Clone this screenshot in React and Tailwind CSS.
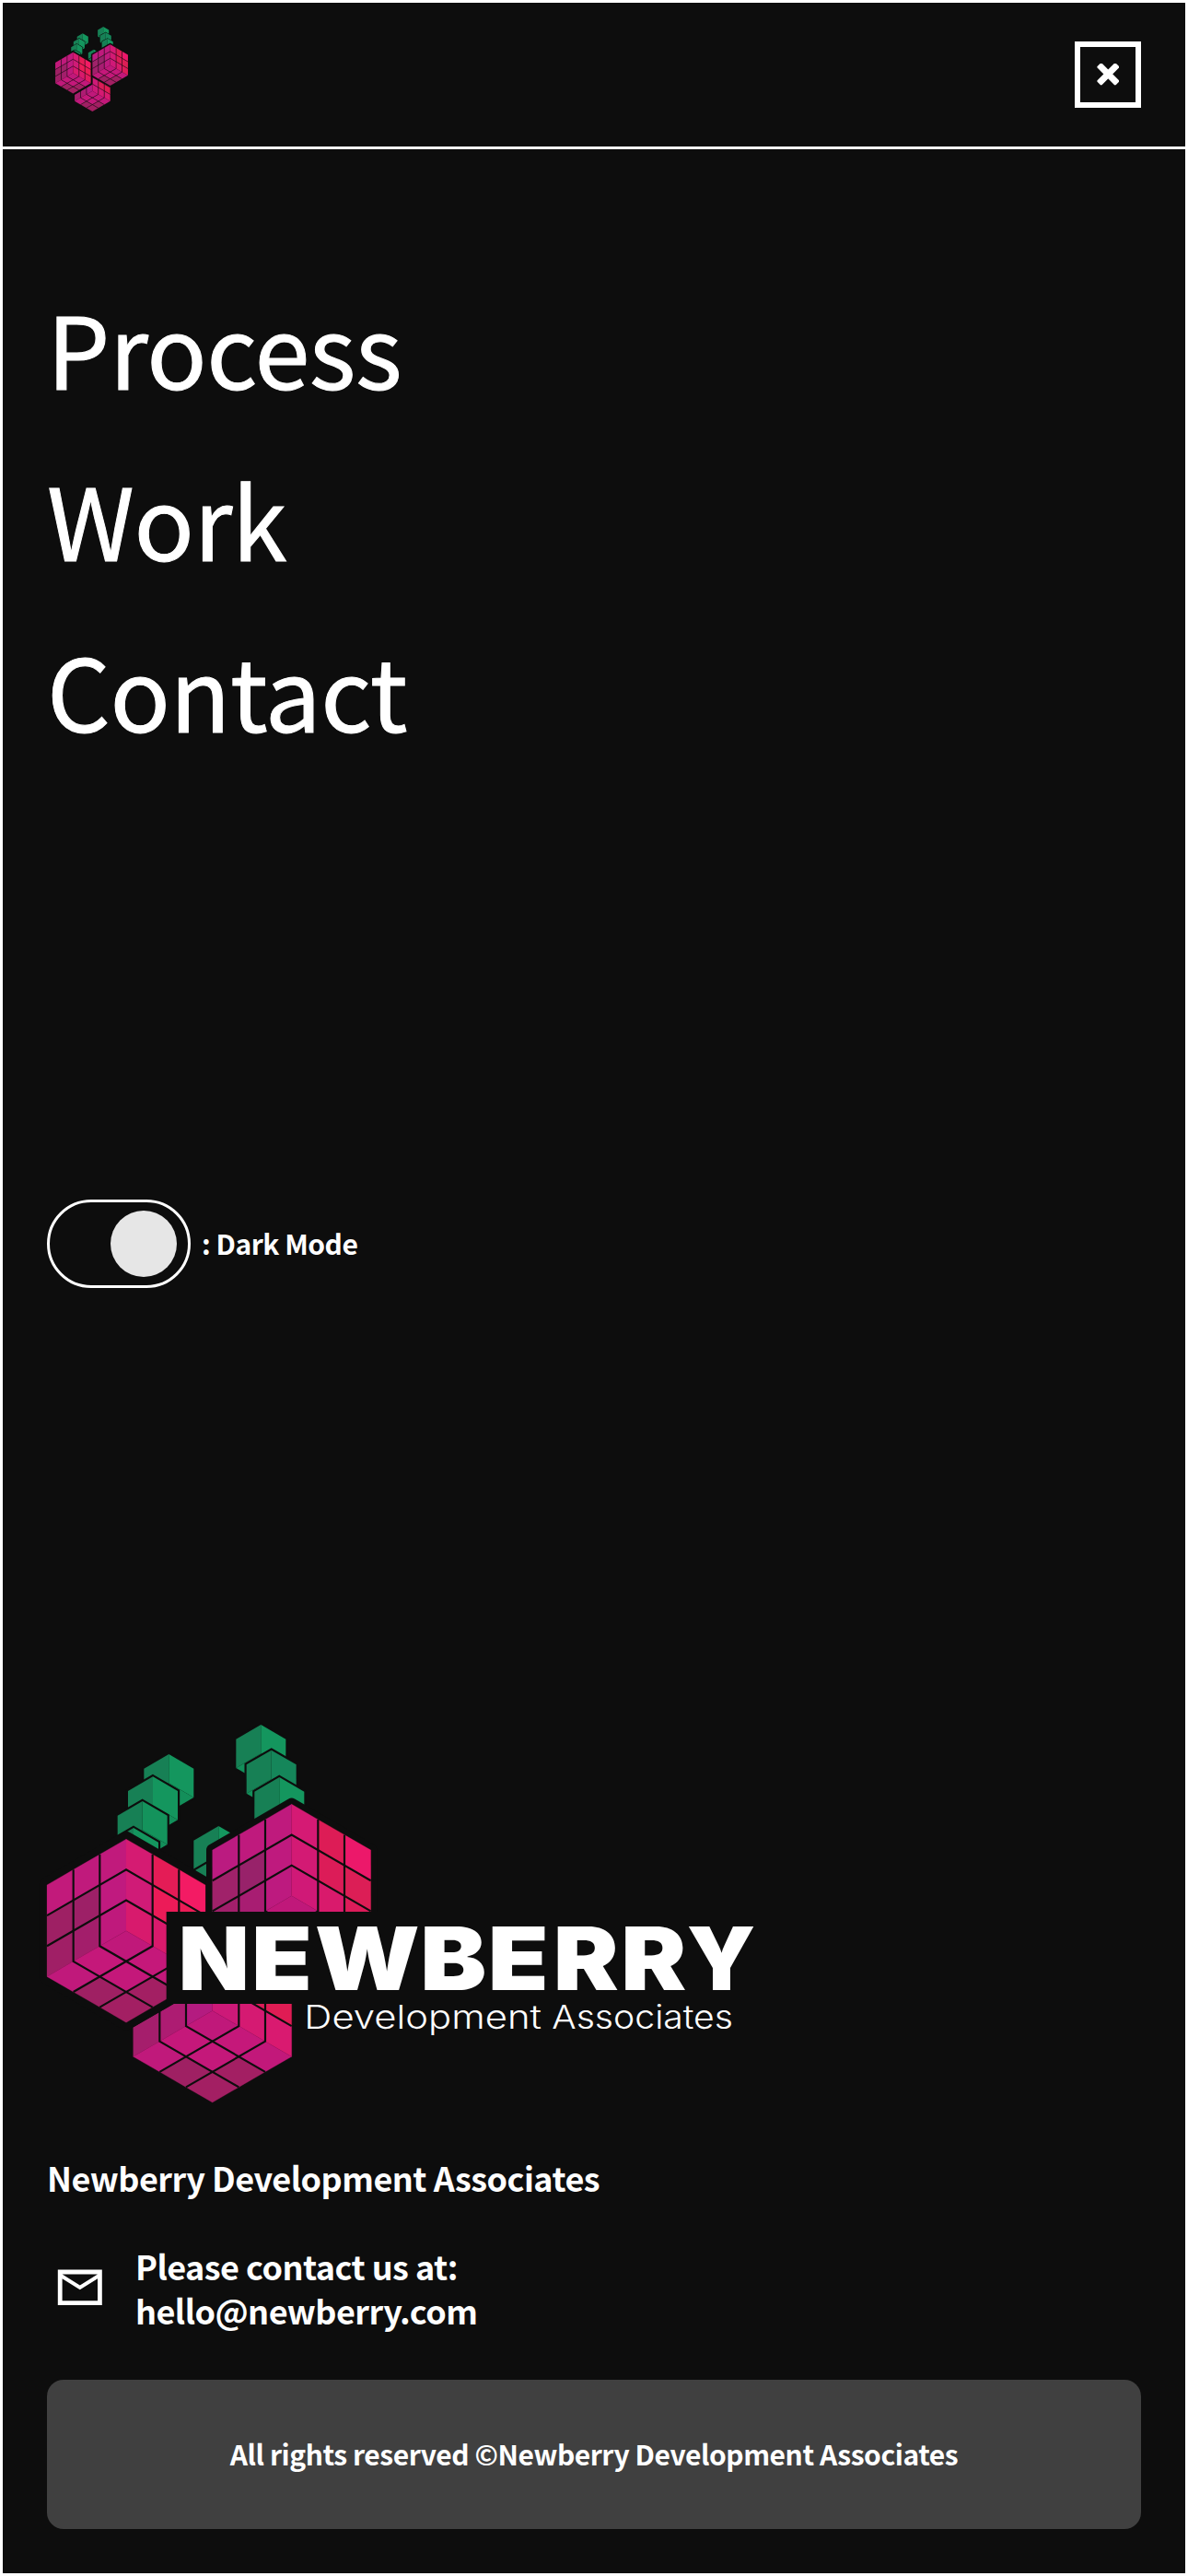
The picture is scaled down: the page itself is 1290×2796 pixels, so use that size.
const BG = '#0d0d0d';
const W = 258;
const R = 298.5;

const pts = (list) => list.map((p) => p.join(',')).join(' ');

const hexagon = (cx, cy, w, r) =>
  pts([
    [cx, cy - r],
    [cx + w, cy - r / 2],
    [cx + w, cy + r / 2],
    [cx, cy + r],
    [cx - w, cy + r / 2],
    [cx - w, cy - r / 2],
  ]);

// Three faces, each given as an origin and two edge vectors.
const FACES = [
  { o: [-W, -R / 2], u: [W, -R / 2], v: [0, R] },
  { o: [0, -R], u: [W, R / 2], v: [0, R] },
  { o: [0, 0], u: [W, R / 2], v: [-W, R / 2] },
];

function Cube({ cx, cy, colors, halo }) {
  return (
    <g transform={`translate(${cx} ${cy})`}>
      <polygon points={hexagon(0, 0, W, R)} fill={BG} stroke={BG} strokeWidth={halo * 2} strokeLinejoin="round" />
      {FACES.map((f, fi) =>
        colors[fi].map((color, i) => {
          const a = i % 3;
          const b = Math.floor(i / 3);
          const at = (s, t) => [
            f.o[0] + (f.u[0] * s + f.v[0] * t) / 3,
            f.o[1] + (f.u[1] * s + f.v[1] * t) / 3,
          ];
          return (
            <polygon
              key={`${fi}-${i}`}
              points={pts([at(a, b), at(a + 1, b), at(a + 1, b + 1), at(a, b + 1)])}
              fill={color}
              stroke={color}
              strokeWidth="0.8"
            />
          );
        }),
      )}
      <g fill="none" stroke={BG} strokeWidth="6.5">
        <path d="M-86,-248.7V49.8L172,199" />
        <path d="M86,-248.7V49.8L-172,199" />
        <path d="M-172,-199V99.5L86,248.7" />
        <path d="M172,-199V99.5L-86,248.7" />
        <path d="M-258,-49.8L0,-199L258,-49.8" />
        <path d="M-258,49.8L0,-99.5L258,49.8" />
      </g>
    </g>
  );
}

function Leaf({ cx, cy, left = '#178055', right = '#14965e', base = '#138f5a' }) {
  const w = 81;
  const r = 94;
  return (
    <g transform={`translate(${cx} ${cy})`}>
      <polygon points={hexagon(0, 0, w, r)} fill={BG} stroke={BG} strokeWidth="13" />
      <polygon points={pts([[-w, -r / 2], [0, -r], [0, 0], [-w, r / 2]])} fill={left} />
      <polygon points={pts([[w, -r / 2], [0, -r], [0, 0], [w, r / 2]])} fill={right} />
      <polygon points={pts([[0, 0], [w, r / 2], [0, r], [-w, r / 2]])} fill={base} />
    </g>
  );
}

const BASE_FACE = ['#c0187a', '#c5187a', '#c2187a', '#c5187a', '#c4187a', '#a31f63', '#c0197b', '#9f2063', '#a31f63'];

const LEFT_CUBE = [
  ['#c21a7b', '#c01a7c', '#c11a7c', '#9e2064', '#9d2067', '#c01a7f', '#a01f66', '#a31e6b', '#bf197c'],
  ['#d51b72', '#e41c56', '#f31b64', '#d01b77', '#ec1b58', '#ec1c56', '#d81a6d', '#d91a6c', '#e21b60'],
  BASE_FACE,
];
const RIGHT_CUBE = [
  ['#bb1b80', '#bf1a7d', '#bf1a7d', '#a0226a', '#98226a', '#bf1a7e', '#a21f6b', '#a81d72', '#bd1a7f'],
  ['#d51a74', '#dd1c56', '#ec186a', '#d31a74', '#dc1c58', '#dc1e56', '#d01977', '#d91a6c', '#dd1c5a'],
  BASE_FACE,
];
const BOTTOM_CUBE = [
  ['#b91b80', '#bf1a7d', '#bf1a7d', '#a11f68', '#a31f6a', '#bf1a7d', '#a51e6c', '#ad1c72', '#b41b80'],
  ['#cf1a76', '#dd1c56', '#ec186a', '#cf1a77', '#dc1c58', '#e01c54', '#cd1978', '#d51a72', '#d91a70'],
  BASE_FACE,
];

function Berries() {
  return (
    <g>
      <Leaf cx={460} cy={256} />
      <Leaf cx={408} cy={329} />
      <Leaf cx={374} cy={409} right="#14935c" />
      <Leaf cx={345} cy={496} />
      <Leaf cx={760} cy={160} />
      <Leaf cx={794} cy={243} right="#15865a" />
      <Leaf cx={820} cy={331} />
      <Leaf cx={622} cy={490} />
      <Leaf cx={622} cy={590} />
      <Cube cx={602} cy={997.5} colors={BOTTOM_CUBE} halo={0} />
      <Cube cx={321} cy={737} colors={LEFT_CUBE} halo={25} />
      <Cube cx={860} cy={623.5} colors={RIGHT_CUBE} halo={20} />
    </g>
  );
}

// Each letter with its left edge and advance in logo units.
const LETTERS = [
  ['N', 491, 231],
  ['E', 729, 198],
  ['W', 935, 342],
  ['B', 1279, 216],
  ['E', 1499, 198],
  ['R', 1712, 213],
  ['R', 1933, 213],
  ['Y', 2147, 224],
];

function FullLogo() {
  return (
    <svg className="block h-[410px] w-[768px] overflow-visible" viewBox="63 66 2304 1230" role="img" aria-label="Newberry Development Associates">
      <Berries />
      <rect x="452" y="675" width="1915" height="300" fill={BG} />
      <g fill="#fff" fontFamily="Inter, sans-serif">
        <g fontSize="286" fontWeight="900">
          {LETTERS.map(([ch, x, w], i) => (
            <text key={i} x={x} y="929" textLength={w} lengthAdjust="spacingAndGlyphs">
              {ch}
            </text>
          ))}
        </g>
        <g fontSize="107" fontWeight="300">
          <text x="901" y="1056" textLength="773" lengthAdjust="spacingAndGlyphs">
            Development
          </text>
          <text x="1708" y="1056" textLength="590" lengthAdjust="spacingAndGlyphs">
            Associates
          </text>
        </g>
      </g>
    </svg>
  );
}

function MailIcon() {
  return (
    <svg className="h-[57.6px] w-[57.6px] shrink-0" viewBox="0 0 24 24" fill="currentColor" aria-hidden="true">
      <path d="M22 4H2v16h20V4zm-2 14H4V8l8 5 8-5v10zm-8-7L4 6h16l-8 5z" />
    </svg>
  );
}

export default function App() {
  return (
    <div className="flex h-[2796px] w-[1290px] flex-col border-[3px] border-white bg-[#0d0d0d] font-['Noto_Sans_CJK_JP',sans-serif] text-white">
      <header className="flex h-[159px] shrink-0 items-start justify-between border-b-[3px] border-white pr-12 pl-[57px]">
        <svg className="mt-[26px] h-[92px] w-[79px]" viewBox="63 66 1055 1230" role="img" aria-label="Newberry">
          <Berries />
        </svg>
        <button aria-label="Close menu" className="mt-[42px] flex h-[72px] w-[72px] items-center justify-center border-[6px] border-white">
          <svg className="h-6 w-6" viewBox="0 0 24 24" fill="currentColor">
            <g transform="translate(12.3 11.4)">
              <rect x="-14.2" y="-3.5" width="28.4" height="7" rx="1.4" transform="rotate(45)" />
              <rect x="-14.2" y="-3.5" width="28.4" height="7" rx="1.4" transform="rotate(-45)" />
            </g>
          </svg>
        </button>
      </header>
      <main className="flex flex-col px-12">
        <nav className="flex flex-col pt-[121px] text-[108px] leading-[186px] tracking-[-0.4px] [-webkit-text-stroke:1px_white]">
          <a>Process</a>
          <a>Work</a>
          <a>Contact</a>
        </nav>
        <div className="mt-[461px] flex items-center gap-3">
          <div role="switch" aria-checked="true" className="flex h-24 w-[156px] items-center justify-end rounded-full border-[3px] border-white pr-3">
            <span className="h-[72px] w-[72px] rounded-full bg-[#e6e6e6]" />
          </div>
          <span className="pb-[2px] text-[30px] leading-[48px] font-bold tracking-[-0.5px]">: Dark Mode</span>
        </div>
      </main>
      <footer className="mt-[474px] flex flex-col px-12">
        <FullLogo />
        <p className="mt-[57px] text-[36px] leading-[48px] font-bold tracking-[-0.52px]">Newberry Development Associates</p>
        <div className="mt-[48px] flex items-center pl-[7px]">
          <MailIcon />
          <p className="ml-[31.4px] text-[36px] leading-[48px] font-bold tracking-[-0.55px]">
            Please contact us at:
            <br />
            hello@newberry.com
          </p>
        </div>
        <div className="mt-[52px] flex h-[162px] items-center justify-center rounded-[18px] bg-[#404040]">
          <p className="pb-[2px] text-[30px] leading-[48px] font-bold tracking-[-0.45px]">All rights reserved ©Newberry Development Associates</p>
        </div>
      </footer>
    </div>
  );
}
